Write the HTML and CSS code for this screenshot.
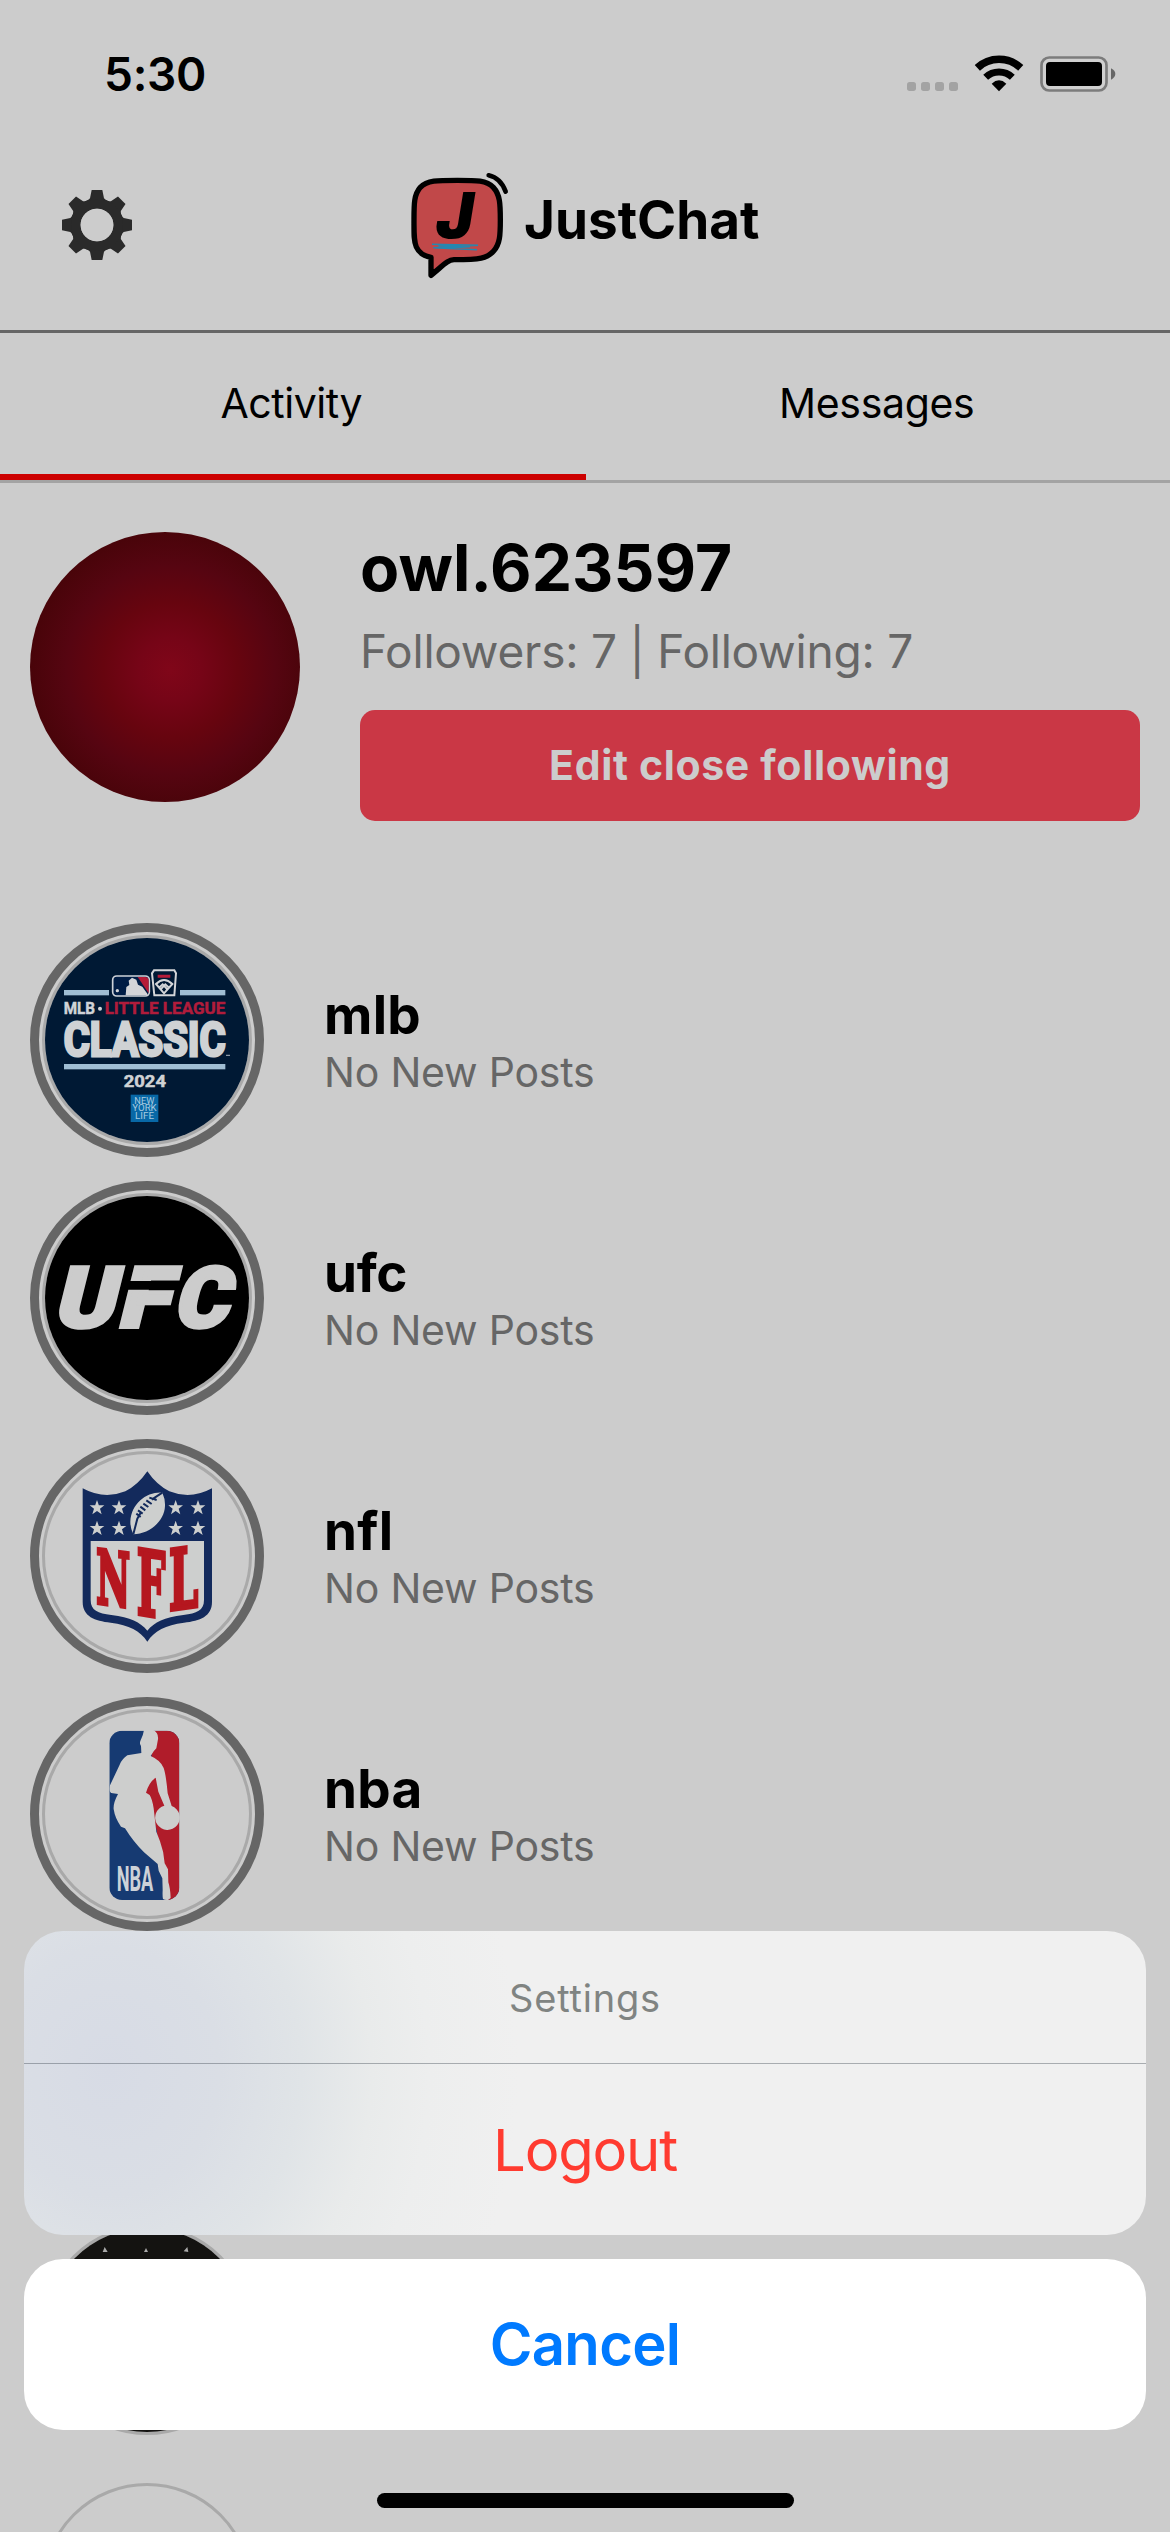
FILE: index.html
```html
<!DOCTYPE html>
<html lang="en">
<head>
<meta charset="utf-8">
<title>JustChat</title>
<link rel="stylesheet" href="styles.css">
</head>
<body>
<div class="screen">
  <div class="status">
    <span class="time">5:30</span>
    <svg class="status-icons" viewBox="78 72 630 120">
      <g fill="#a3a3a3"><rect x="81" y="156" width="27" height="27" rx="8"/><rect x="123" y="156" width="27" height="27" rx="8"/><rect x="165" y="156" width="27" height="27" rx="8"/><rect x="207" y="156" width="27" height="27" rx="8"/></g>
      <g fill="none" stroke="#000"><path stroke-width="23" d="M292 113.500A95 95 0 0 1 422 113.500"/><path stroke-width="21" d="M317 142A58 58 0 0 1 397 142"/></g>
      <path d="M335 161Q357 141 379 161L357 183.500Z"/>
      <rect x="484.500" y="82.500" width="195" height="99" rx="23" fill="#d0d0d0" stroke="#7c7c7c" stroke-width="8"/>
      <rect x="498" y="96" width="168" height="72" rx="12"/>
      <path fill="#666" d="M693 115Q706 122 706 132T693 149Z"/>
    </svg>
  </div>

  <header class="header">
    <svg class="gear" viewBox="-105 -105 210 210">
      <defs><path id="tooth" d="M-16-105H16L21-80Q25-74 36-71V-55H-36V-71Q-25-74-21-80Z"/></defs>
      <g fill="#2a2a2a"><use href="#tooth"/><use href="#tooth" transform="rotate(45)"/><use href="#tooth" transform="rotate(90)"/><use href="#tooth" transform="rotate(135)"/><use href="#tooth" transform="rotate(180)"/><use href="#tooth" transform="rotate(225)"/><use href="#tooth" transform="rotate(270)"/><use href="#tooth" transform="rotate(315)"/></g>
      <circle r="63.500" fill="none" stroke="#2a2a2a" stroke-width="29"/>
      <circle r="49" fill="#ccc"/>
    </svg>
    <div class="brand">
      <svg class="brand-mark" viewBox="84 66 318 324">
        <path d="M232 91C290 91 320 91 340 112C360 134 361 160 361 210C361 255 360 282 341 303C322 325 300 329 222 329C203 330 192 344 153 376V322C131 318 117 309 109 291C101 274 102 250 102 208C102 160 102 134 121 112C141 91 172 91 232 91Z" fill="#c14849" stroke="#000" stroke-width="16" stroke-linejoin="round"/>
        <path d="M326 76Q362 84 377 125" fill="none" stroke="#000" stroke-width="14" stroke-linecap="round"/>
        <text class="mark-letter" x="168" y="264">J</text>
        <path d="M156 283L294 286L160 293L291 299M175 287L270 290L190 295" fill="none" stroke="#2587b0" stroke-width="4.500"/>
      </svg>
      <span class="brand-name">JustChat</span>
    </div>
  </header>

  <nav class="tabs">
    <div class="tab active">Activity</div>
    <div class="tab messages">Messages</div>
  </nav>

  <section class="profile">
    <div class="photo"></div>
    <div class="profile-info">
      <div class="handle">owl.623597</div>
      <div class="counts">Followers: 7 | Following: 7</div>
      <div class="edit">Edit close following</div>
    </div>
  </section>

  <main class="feed">
    <div class="row">
      <div class="ring"><div class="avatar">
        <svg viewBox="105 114 612 612">
          <rect x="105" y="114" width="612" height="612" fill="#001934"/>
          <g fill="#9fbdd3"><rect x="162" y="270" width="135" height="16"/><rect x="510" y="270" width="136" height="16"/><rect x="162" y="492" width="484" height="16"/></g>
          <rect x="308" y="228" width="110" height="60" rx="12" fill="#001d45" stroke="#cdd2d8" stroke-width="5"/>
          <path d="M383 231H405Q416 231 416 242V280Z" fill="#b51b38"/>
          <path d="M347 286L349 261L358 255L356 242L366 233L379 239L384 254L397 260L412 281V286Z" fill="#d3d5d8"/><circle cx="322" cy="272" r="5" fill="#d3d5d8"/>
          <path d="M432 211H493L498 220L493 286H433L426 220Z" fill="#001934" stroke="#d3d5d8" stroke-width="6"/>
          <path d="M443 229H481" stroke="#b51b38" stroke-width="9"/>
          <path d="M438 252Q462 228 487 252L462 280ZM447 263L458 253L472 268M477 263L466 253L452 268" fill="none" stroke="#d3d5d8" stroke-width="6"/>
          <text class="logo-sans" x="161" y="343" font-size="51" textLength="94" lengthAdjust="spacingAndGlyphs" fill="#cfd3d7" stroke="#cfd3d7">MLB</text>
          <circle cx="270" cy="326" r="6" fill="#cfd3d7"/>
          <text class="logo-sans" x="284" y="343" font-size="51" textLength="362" lengthAdjust="spacingAndGlyphs" fill="#b01c3b" stroke="#b01c3b">LITTLE LEAGUE</text>
          <text class="logo-sans heavy" x="161" y="467" font-size="145" textLength="486" lengthAdjust="spacingAndGlyphs" fill="#cfd2d4" stroke="#cfd2d4">CLASSIC</text>
          <path d="M648 466H660" stroke="#8b97a5" stroke-width="4"/>
          <text class="logo-sans" x="341" y="562" font-size="49" textLength="127" lengthAdjust="spacingAndGlyphs" fill="#cfd2d4" stroke="#cfd2d4">2024</text>
          <rect x="362" y="584" width="83" height="82" fill="#0868a6"/>
          <g class="sponsor"><text x="373" y="612" textLength="60" lengthAdjust="spacingAndGlyphs">NEW</text><text x="367" y="634" textLength="73" lengthAdjust="spacingAndGlyphs">YORK</text><text x="375" y="656" textLength="57" lengthAdjust="spacingAndGlyphs">LIFE</text></g>
        </svg>
      </div></div>
      <div class="row-text"><div class="name">mlb</div><div class="sub">No New Posts</div></div>
    </div>

    <div class="row">
      <div class="ring"><div class="avatar">
        <svg viewBox="105 108 612 612">
          <rect x="105" y="108" width="612" height="612"/>
          <g transform="translate(0 502) skewX(-14)" class="ufc"><text x="127" y="0" textLength="182" lengthAdjust="spacingAndGlyphs">U</text><text x="319" y="0" textLength="153" lengthAdjust="spacingAndGlyphs">F</text><text x="486" y="0" textLength="164" lengthAdjust="spacingAndGlyphs">C</text></g>
          <path d="M354 363H512L505 389H347Z"/>
        </svg>
      </div></div>
      <div class="row-text"><div class="name ufc-name">ufc</div><div class="sub">No New Posts</div></div>
    </div>

    <div class="row">
      <div class="ring"><div class="avatar">
        <svg viewBox="105 102 612 612">
          <path d="M412 154Q440 195 478 214Q542 240 606 205V545C606 590 570 602 522 608C466 615 434 632 412 665C390 632 358 615 302 608C254 602 218 590 218 545V205Q282 240 346 214Q384 195 412 154Z" fill="#132a5c"/>
          <path d="M242 363H582V540C582 572 560 580 520 585C462 592 434 606 412 632C390 606 362 592 304 585C264 580 242 572 242 540Z" fill="#cdcfce"/>
          <defs><path id="star" d="M0-23L5.500-7H22L9 3L14 20L0 10L-14 20L-9 3L-22-7H-5.500Z"/></defs>
          <g fill="#cdcfce"><use href="#star" x="261" y="263"/><use href="#star" x="327" y="263"/><use href="#star" x="497" y="263"/><use href="#star" x="564" y="263"/><use href="#star" x="261" y="325"/><use href="#star" x="327" y="325"/><use href="#star" x="497" y="325"/><use href="#star" x="564" y="325"/></g>
          <path d="M457 218C410 215 364 250 361 305Q361 326 370 343C418 342 463 304 465 258Q466 237 457 218Z" fill="#cdcfce"/>
          <path d="M457 218L425 239M392 278L382 296L370 343M379 281L392 291M384 271L398 281M391 260L406 271M400 251L415 261M409 241L425 252M418 233L440 240" fill="none" stroke="#132a5c" stroke-width="6"/>
          <g class="nfl">
            <text transform="translate(259 548) skewY(8) scale(.5 1)" font-size="222" x="0" y="0">N</text>
            <text transform="translate(380 581) skewY(9) scale(.45 1)" font-size="269" x="0" y="0">F</text>
            <text transform="translate(477 571) skewY(-8) scale(.5 1)" font-size="249" x="0" y="0">L</text>
          </g>
        </svg>
      </div></div>
      <div class="row-text"><div class="name">nfl</div><div class="sub">No New Posts</div></div>
    </div>

    <div class="row">
      <div class="ring"><div class="avatar">
        <svg viewBox="105 96 612 612">
          <defs><clipPath id="badge"><rect x="298" y="152" width="210" height="508" rx="38"/></clipPath></defs>
          <g clip-path="url(#badge)">
            <rect x="298" y="152" width="210" height="508" fill="#163a72"/>
            <path d="M418 152H508V660H468L440 450L405 338L425 228Z" fill="#b01c2a"/>
          </g>
          <path d="M402 150Q400 165 391 183Q388 192 393 198L394 219L352 226Q336 237 329 254L300 316Q297 337 304 339L324 342Q309 370 311 388Q315 415 333 440L345 445Q369 484 402 517L443 552L446 572L457 595L458 630Q457 650 459 657Q465 661 474 660L482 654Q481 625 475 607L474 568L464 550Q462 516 450 484L439 455L431 385Q427 358 419 345L408 338Q417 307 437 293L445 335L463 377A37 37 0 1 0 485 378L473 340Q468 284 461 264Q452 241 422 228Q431 212 439 205L444 178Q446 158 430 150Z" fill="#cdcecd"/>
          <text class="logo-sans" x="320" y="632" font-size="104" textLength="110" lengthAdjust="spacingAndGlyphs" fill="#cdd2d8">NBA</text>
        </svg>
      </div></div>
      <div class="row-text"><div class="name">nba</div><div class="sub">No New Posts</div></div>
    </div>

    <div class="row"><div class="ring plain"><div class="avatar navy"></div></div></div>
    <div class="row"><div class="ring plain"><div class="avatar">
      <svg viewBox="0 0 612 612"><rect width="612" height="612" fill="#141311"/><path d="M173 72L179 57L188 72M297 72L303 60L309 72M416 70L427 57L430 72" fill="#aaa"/></svg>
    </div></div></div>
    <div class="row"><div class="ring plain"><div class="avatar"></div></div></div>
  </main>

  <div class="sheet">
    <div class="group">
      <div class="sheet-title">Settings</div>
      <div class="action logout">Logout</div>
    </div>
    <div class="action cancel">Cancel</div>
  </div>
  <div class="home-bar"></div>
</div>
</body>
</html>
```
FILE: styles.css
```css
* { box-sizing: border-box; }
body { margin: 0; background: #ccc; }
svg { display: block; }

.screen {
  position: relative;
  width: 1170px;
  height: 2532px;
  overflow: hidden;
  background: #ccc;
  color: #000;
  font-family: Inter, "Liberation Sans", sans-serif;
  white-space: nowrap;
}

.status {
  display: flex;
  justify-content: space-between;
  align-items: center;
  height: 148px;
  padding: 0 54px 0 104px;
}
.time { font-size: 46px; font-weight: 600; letter-spacing: -.29px; }
.status-icons { width: 210px; height: 40px; }

.header {
  display: flex;
  align-items: flex-start;
  height: 185px;
  padding-left: 62px;
  border-bottom: 3px solid #666;
}
.gear { width: 70px; height: 70px; margin-top: 42px; }
.brand { display: flex; gap: 10px; margin: 24px 0 0 276px; }
.brand-mark { width: 106px; height: 108px; }
.brand-name { margin-top: 21px; font-size: 53px; font-weight: 700; line-height: 54px; }
.mark-letter { font-family: Inter, sans-serif; font-size: 190px; font-weight: 900; font-style: italic; }

.tabs { display: flex; height: 150px; border-bottom: 3px solid #a3a3a3; }
.tab {
  flex: 1;
  padding: 45px 3px 0 0;
  font-size: 41px;
  line-height: 50px;
  letter-spacing: -.46px;
  text-align: center;
}
.tab.messages { padding-right: 2px; letter-spacing: -.33px; }
.tab.active { border-bottom: 6px solid #c00; }

.profile { display: flex; gap: 60px; padding: 49px 30px 0; }
.photo {
  flex: none;
  width: 270px;
  height: 270px;
  border-radius: 50%;
  background: radial-gradient(circle at 52% 51%, #800619 0, #760517 16%, #67050f 34%, #560511 53%, #480409 72%, #350309 100%);
}
.profile-info { flex: 1; }
.handle { font-size: 64px; font-weight: 700; line-height: 72px; letter-spacing: .1px; }
.counts { margin-top: 19px; font-size: 46px; line-height: 56px; letter-spacing: -.22px; color: #666; }
.edit {
  margin-top: 31px;
  height: 111px;
  border-radius: 15px;
  background: #ca3745;
  color: #ccc;
  font-size: 41px;
  font-weight: 700;
  line-height: 111px;
  letter-spacing: .65px;
  text-align: center;
}

.feed { display: flex; flex-direction: column; gap: 24px; padding: 102px 30px 0; }
.row { display: flex; gap: 60px; height: 234px; }
.ring { width: 234px; height: 234px; padding: 3px; border: 9px solid #666; border-radius: 50%; }
.ring.plain { border-color: transparent; }
.avatar { width: 210px; height: 210px; border: 3px solid #a9a9a9; border-radius: 50%; overflow: hidden; }
.navy { background: #1c3c78; }
.row-text { padding-top: 61px; }
.name { font-size: 53px; font-weight: 700; line-height: 62px; letter-spacing: .3px; }
.ufc-name { letter-spacing: -.3px; }
.sub { font-size: 41px; line-height: 52px; letter-spacing: -.21px; color: #666; }

.logo-sans { font-family: Roboto, sans-serif; font-weight: 700; stroke-width: 1.5px; }
.heavy { stroke-width: 9px; }
.sponsor { font: 25px Roboto, sans-serif; fill: #a9cbe0; }
.ufc { font: 900 252px Roboto, sans-serif; fill: #ccc; stroke: #ccc; stroke-width: 12px; }
.nfl { font-family: "DejaVu Serif", serif; font-weight: 700; fill: #b5171f; stroke: #b5171f; stroke-width: 13px; }

.sheet {
  position: absolute;
  top: 1931px;
  left: 24px;
  right: 24px;
  display: flex;
  flex-direction: column;
  gap: 24px;
  text-align: center;
}
.group {
  border-radius: 39px;
  background: radial-gradient(ellipse 410px 460px at 85px 140px, #d7dbe5 0, #dadee5 27%, #e0e4e7 47%, #e9ebeb 64%, #edeeee 78%, #f0f0f0 100%);
}
.sheet-title {
  height: 133px;
  border-bottom: 1px solid rgba(60, 70, 80, .4);
  color: #808482;
  font-size: 38px;
  line-height: 134px;
  letter-spacing: .8px;
}
.action { height: 171px; font-size: 58px; line-height: 171px; }
.logout { padding-top: 1px; color: #ff3b30; letter-spacing: -1.24px; }
.cancel { border-radius: 39px; background: #fff; color: #007aff; font-weight: 600; letter-spacing: -.72px; }

.home-bar {
  position: absolute;
  left: 377px;
  top: 2493px;
  width: 417px;
  height: 15px;
  border-radius: 8px;
  background: #000;
}
```
